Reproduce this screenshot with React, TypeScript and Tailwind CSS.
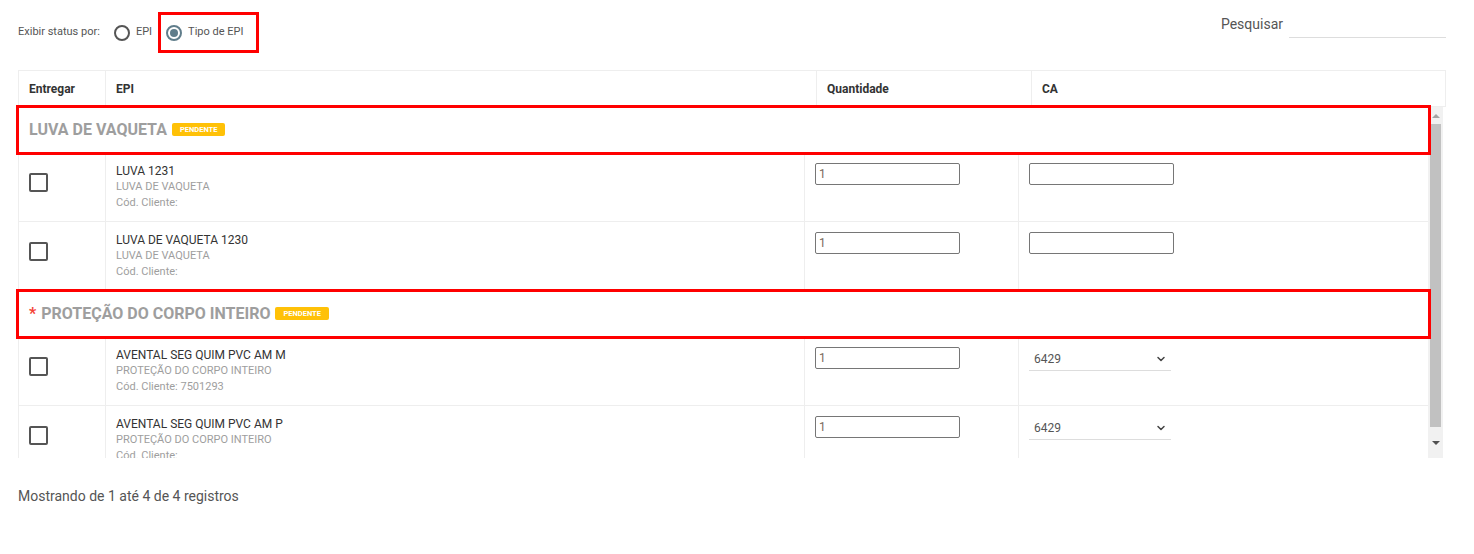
import { ChevronDown } from 'lucide-react'

type Item = {
  nome: string
  tipo: string
  cod: string
  ca: string | null
}

type Grupo = {
  titulo: string
  obrigatorio: boolean
  itens: Item[]
}

const grupos: Grupo[] = [
  {
    titulo: 'LUVA DE VAQUETA',
    obrigatorio: false,
    itens: [
      { nome: 'LUVA 1231', tipo: 'LUVA DE VAQUETA', cod: '', ca: null },
      { nome: 'LUVA DE VAQUETA 1230', tipo: 'LUVA DE VAQUETA', cod: '', ca: null },
    ],
  },
  {
    titulo: 'PROTEÇÃO DO CORPO INTEIRO',
    obrigatorio: true,
    itens: [
      { nome: 'AVENTAL SEG QUIM PVC AM M', tipo: 'PROTEÇÃO DO CORPO INTEIRO', cod: '7501293', ca: '6429' },
      { nome: 'AVENTAL SEG QUIM PVC AM P', tipo: 'PROTEÇÃO DO CORPO INTEIRO', cod: '', ca: '6429' },
    ],
  },
]

function Radio({ checked }: { checked?: boolean }) {
  return checked ? (
    <span className="flex h-4 w-4 shrink-0 items-center justify-center rounded-full border-2 border-[#607d8b]">
      <span className="block h-2 w-2 rounded-full bg-[#607d8b]" />
    </span>
  ) : (
    <span className="block h-4 w-4 shrink-0 rounded-full border-2 border-[#555]" />
  )
}

function GroupRow({ grupo }: { grupo: Grupo }) {
  return (
    <div className="relative flex h-[46px] items-center border-b border-[#eee] pl-[10px]">
      <span className="text-[16px] font-bold text-[#9e9e9e]">
        {grupo.obrigatorio && <span className="mr-[5px] text-[#f44336]">*</span>}
        {grupo.titulo}
      </span>
      <span className="ml-[5px] flex h-[13px] items-center rounded-[2px] bg-[#ffc107] px-[8px] text-[7.5px] font-bold text-white">
        PENDENTE
      </span>
      {/* marcação vermelha */}
      <div className="pointer-events-none absolute -top-[2px] -bottom-[3px] -left-[3px] -right-[3px] z-10 border-[3px] border-[#ff0000]" />
    </div>
  )
}

function ItemRow({ item, last }: { item: Item; last?: boolean }) {
  return (
    <div
      className={
        last
          ? 'flex h-[52px] overflow-hidden'
          : 'flex h-[69px] border-b border-[#eee]'
      }
    >
      <div className="w-[87px] shrink-0 border-r border-[#eee] pl-[10px] pt-[20px]">
        <div className="h-[19px] w-[19px] rounded-[2px] border-2 border-[#555]" />
      </div>
      <div className="w-[699px] shrink-0 border-r border-[#eee] pl-[10px] pt-[10px] leading-[16px]">
        <div className="text-[12px] text-[#333]">{item.nome}</div>
        <div className="text-[11px] text-[#9e9e9e]">{item.tipo}</div>
        <div className="text-[11px] text-[#9e9e9e]">
          Cód. Cliente:{item.cod && ` ${item.cod}`}
        </div>
      </div>
      <div className="w-[214px] shrink-0 border-r border-[#eee] pl-[10px] pt-[10px]">
        <div className="flex h-[22px] w-[145px] items-center rounded-[2px] border border-[#767676] pl-[3px] text-[12px] text-[#7a6a5c]">
          1
        </div>
      </div>
      <div className="flex-1 pl-[10px] pt-[10px]">
        {item.ca ? (
          <div className="flex h-[24px] w-[142px] items-center justify-between border-b border-[#ddd] pl-[5px] pr-[4px] text-[12px] text-[#555]">
            <span>{item.ca}</span>
            <ChevronDown size={12} strokeWidth={3} className="text-[#444]" />
          </div>
        ) : (
          <div className="h-[22px] w-[145px] rounded-[2px] border border-[#767676]" />
        )}
      </div>
    </div>
  )
}

function Scrollbar() {
  return (
    <div className="flex w-[15px] shrink-0 flex-col bg-[#f1f1f1]">
      <div className="flex h-[17px] items-center justify-center">
        <span className="h-0 w-0 border-x-[4px] border-b-[4px] border-x-transparent border-b-[#a3a3a3]" />
      </div>
      <div className="mx-[2px] h-[303px] bg-[#c1c1c1]" />
      <div className="flex flex-1 items-center justify-center">
        <span className="h-0 w-0 border-x-[4px] border-t-[4px] border-x-transparent border-t-[#505050]" />
      </div>
    </div>
  )
}

export default function App() {
  return (
    <div className="min-h-[554px] bg-white pl-[18px] pr-[28px] font-['Roboto',sans-serif]">
      <div className="flex h-[70px] items-start justify-between">
        <div className="mt-[12px] flex h-[41px] items-center text-[11px] text-[#555]">
          <span>Exibir status por:</span>
          <span className="ml-[14px] flex">
            <Radio />
          </span>
          <span className="ml-[6px]">EPI</span>
          <div className="ml-[6px] flex h-[41px] items-center gap-[6px] border-[3px] border-[#ff0000] pl-[5px] pr-[13px]">
            <Radio checked />
            <span>Tipo de EPI</span>
          </div>
        </div>
        <div className="mt-[10px] flex items-center gap-[6px]">
          <span className="text-[14px] text-[#555]">Pesquisar</span>
          <div className="h-[28px] w-[157px] border-b border-[#ddd]" />
        </div>
      </div>

      <div className="flex h-[37px] border border-[#eee] text-[12px] font-bold text-[#333]">
        <div className="flex w-[87px] shrink-0 items-center border-r border-[#eee] pl-[10px]">Entregar</div>
        <div className="flex w-[711px] shrink-0 items-center border-r border-[#eee] pl-[10px]">EPI</div>
        <div className="flex w-[215px] shrink-0 items-center border-r border-[#eee] pl-[10px]">Quantidade</div>
        <div className="flex flex-1 items-center pl-[10px]">CA</div>
      </div>

      <div className="flex">
        <div className="w-[1410px] border-l border-[#eee]">
          {grupos.map((g, gi) => (
            <div key={g.titulo}>
              <GroupRow grupo={g} />
              {g.itens.map((item, ii) => (
                <ItemRow
                  key={item.nome}
                  item={item}
                  last={gi === grupos.length - 1 && ii === g.itens.length - 1}
                />
              ))}
            </div>
          ))}
        </div>
        <Scrollbar />
      </div>

      <p className="mt-[28px] text-[14px] leading-[20px] text-[#555]">
        Mostrando de 1 até 4 de 4 registros
      </p>
    </div>
  )
}
